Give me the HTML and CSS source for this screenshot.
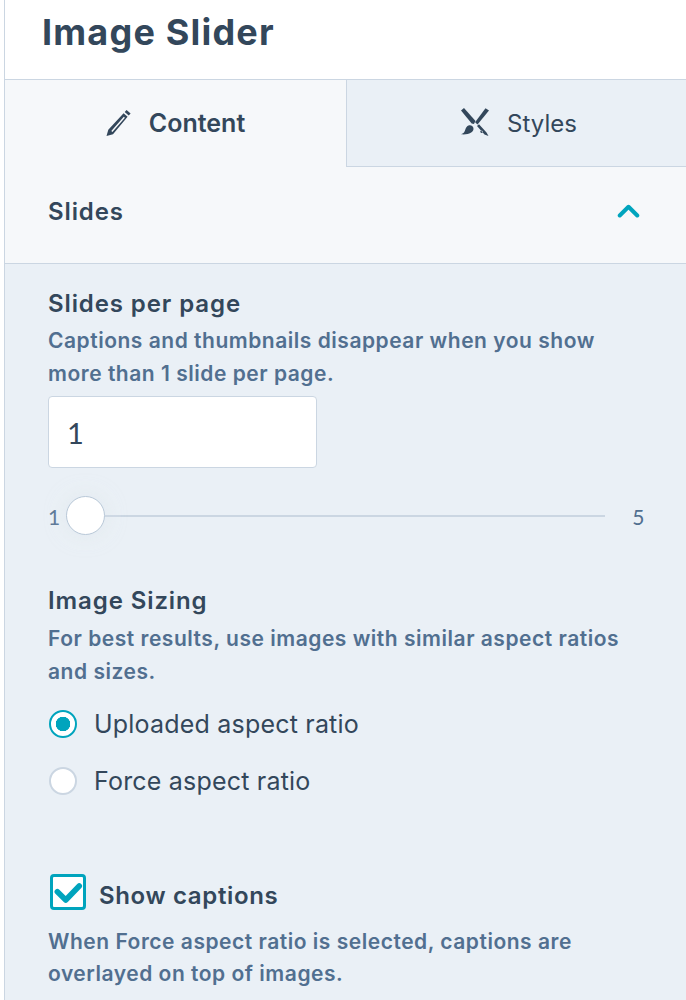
FILE: index.html
```html
<!DOCTYPE html>
<html lang="en">
<head>
  <meta charset="UTF-8">
  <title>Image Slider</title>
  <link rel="stylesheet" href="styles.css">
</head>
<body>
  <div class="panel">
    <h1 class="title">Image Slider</h1>

    <div class="tabs">
      <div class="tab tab-active">
        <svg class="tab-icon" viewBox="0 0 26 26"><path d="M20.600 0l4 3.400-1.900 2.200-4-3.500z M17.600 3.300l4 3.500L7 24.200 0.500 26l1.800-6.200zM17.800 6.700L5.300 21l1.100 1L18.900 7.700z" fill-rule="evenodd"/></svg>
        <span>Content</span>
      </div>
      <div class="tab">
        <svg class="tab-icon tab-icon-wide" viewBox="0 0 30 30"><path d="M1 3.500L4 1l11.500 13-1.600 3-2.200-.6z"/><path d="M25.500 1.200L29 3.600 17.500 17.500l-2.400-2.200z"/><path d="M8.500 18.500c2.700-.7 5 1 5 3.300 0 3.700-5 6.200-12.500 5.500 3.500-1.300 3.800-3 4.500-5.300.4-1.500 1.500-3 3-3.500z"/><path d="M17 19l2-1.800 7.500 8.300 2 3.500-4-1.500-7.500-8.500zM21.500 23.500a1.200 1.200 0 1 0 .01 0z" fill-rule="evenodd"/></svg>
        <span>Styles</span>
      </div>
    </div>

    <div class="section-head">
      <span>Slides</span>
      <svg class="chevron" viewBox="0 0 18 12"><path d="M2 10l7-7 7 7"/></svg>
    </div>

    <div class="section-body">
      <div class="field">
        <h2 class="label">Slides per page</h2>
        <p class="help">Captions and thumbnails disappear when you show more than 1 slide per page.</p>
        <input class="number" type="text" value="1">
        <div class="slider">
          <span>1</span>
          <div class="track"><div class="thumb"></div></div>
          <span>5</span>
        </div>
      </div>

      <div class="field sizing">
        <h2 class="label">Image Sizing</h2>
        <p class="help">For best results, use images with similar aspect ratios and sizes.</p>
        <div class="radios">
          <label class="radio-row"><span class="radio radio-on"></span>Uploaded aspect ratio</label>
          <label class="radio-row"><span class="radio"></span>Force aspect ratio</label>
        </div>
      </div>

      <div class="field captions">
        <div class="check-row">
          <span class="checkbox">
            <svg viewBox="0 0 24 24"><path d="M3.500 11.800l6.700 6.600L21 7.200"/></svg>
          </span>
          <span class="check-label">Show captions</span>
        </div>
        <p class="help">When Force aspect ratio is selected, captions are overlayed on top of images.</p>
      </div>
    </div>
  </div>
</body>
</html>
```

FILE: styles.css
```css
html, body {
  height: 100%;
}
body {
  margin: 0;
  background: #fff;
  color: #33475b;
  font-family: Inter, "Open Sans", sans-serif;
  overflow: hidden;
}
.panel {
  margin-left: 4px;
  border-left: 1px solid #cbd6e2;
  height: 1000px;
  display: flex;
  flex-direction: column;
}
.title {
  margin: 0;
  height: 79px;
  padding: 9px 0 0 37px;
  box-sizing: border-box;
  font-size: 36px;
  line-height: 46px;
  font-weight: 700;
  letter-spacing: 1.2px;
}
.tabs {
  display: flex;
  height: 88px;
  border-top: 1px solid #cbd6e2;
  box-sizing: border-box;
}
.tab {
  flex: 1;
  display: flex;
  align-items: center;
  justify-content: center;
  gap: 17px;
  padding-left: 4px;
  background: #eaf0f6;
  border-bottom: 1px solid #cbd6e2;
  font-size: 24px;
}
.tab-active {
  flex: 0 0 342px;
  box-sizing: border-box;
  padding-left: 0;
  background: #f6f8fa;
  border-bottom: 0;
  border-right: 1px solid #cbd6e2;
  font-size: 25px;
  font-weight: 600;
  padding-bottom: 2px;
}
.tab-icon {
  width: 26px;
  height: 26px;
  fill: #33475b;
}
.tab-icon-wide {
  width: 30px;
  height: 30px;
  margin-bottom: 3px;
}
.section-head {
  height: 97px;
  padding: 0 46px 8px 43px;
  display: flex;
  align-items: center;
  justify-content: space-between;
  background: #f6f8fa;
  border-bottom: 1px solid #cbd6e2;
  box-sizing: border-box;
  font-size: 24px;
  font-weight: 600;
  letter-spacing: 0.9px;
}
.chevron {
  width: 23px;
  height: 15px;
  margin-bottom: 2px;
  fill: none;
  stroke: #00a4bd;
  stroke-width: 3.200;
  stroke-linecap: round;
  stroke-linejoin: round;
}
.section-body {
  flex: 1;
  background: #eaf0f6;
  padding: 24px 40px 0 43px;
}
.label {
  margin: 0;
  font-size: 24px;
  line-height: 32px;
  font-weight: 600;
  letter-spacing: 0.9px;
}
.help {
  margin: 4px 0 0;
  font-size: 21px;
  line-height: 33px;
  font-weight: 600;
  color: #516f90;
  letter-spacing: 0.52px;
}
.number {
  display: block;
  width: 269px;
  height: 72px;
  margin-top: 6px;
  padding: 0 18px;
  box-sizing: border-box;
  background: #fff;
  border: 1px solid #cbd6e2;
  border-radius: 4px;
  color: #33475b;
  font-family: Lato, sans-serif;
  font-size: 29px;
  outline: none;
}
.slider {
  display: flex;
  align-items: center;
  margin-top: 28px;
  height: 40px;
  font-family: Lato, sans-serif;
  font-size: 21px;
  color: #516f90;
}
.track {
  flex: 0 0 539px;
  margin: 0 27px 0 6px;
  height: 2px;
  background: #cbd6e2;
  position: relative;
}
.thumb {
  position: absolute;
  left: 0;
  top: -19px;
  width: 39px;
  height: 39px;
  box-sizing: border-box;
  background: #fff;
  border: 1.500px solid #b9c8d8;
  border-radius: 50%;
  box-shadow: 0 0 0 16px rgba(255, 255, 255, 0.07), 0 0 22px rgba(203, 214, 226, 0.35);
}
.sizing {
  margin-top: 49px;
}
.sizing .help {
  margin-top: 5px;
}
.radios {
  margin-top: 16px;
  display: flex;
  flex-direction: column;
  gap: 17px;
}
.radio-row {
  display: flex;
  align-items: center;
  gap: 17px;
  height: 40px;
  font-size: 25px;
  letter-spacing: 0.2px;
}
.radio {
  width: 28px;
  height: 28px;
  box-sizing: border-box;
  margin-left: 1px;
  background: #fff;
  border: 2px solid #cbd6e2;
  border-radius: 50%;
}
.radio-on {
  border-color: #00a4bd;
  background: radial-gradient(circle, #00a4bd 0 7px, #fff 7.500px);
}
.captions {
  margin-top: 73px;
}
.check-row {
  display: flex;
  align-items: center;
  gap: 13px;
}
.checkbox {
  width: 36px;
  height: 36px;
  margin: 0 0 2px 2px;
  box-sizing: border-box;
  background: #fff;
  border: 3px solid #00a4bd;
  border-radius: 4px;
  display: flex;
}
.checkbox svg {
  width: 30px;
  height: 30px;
  fill: none;
  stroke: #00a4bd;
  stroke-width: 4.500;
  stroke-linecap: round;
  stroke-linejoin: round;
}
.check-label {
  font-size: 24px;
  font-weight: 600;
  letter-spacing: 0.65px;
  margin-top: 4px;
}
.captions .help {
  margin-top: 14px;
  line-height: 32px;
}
```
